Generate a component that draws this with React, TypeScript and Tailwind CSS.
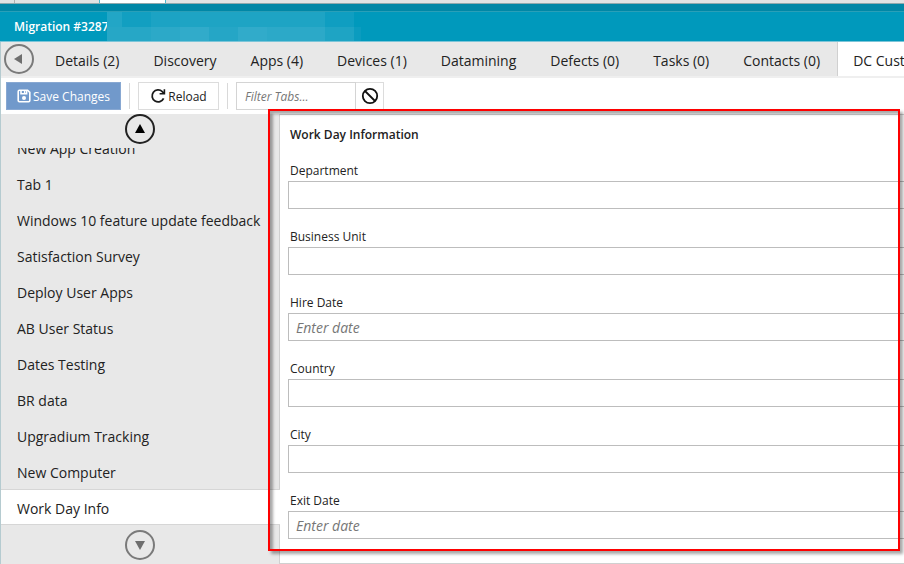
import React from 'react';

const tabs = [
  'Details (2)',
  'Discovery',
  'Apps (4)',
  'Devices (1)',
  'Datamining',
  'Defects (0)',
  'Tasks (0)',
  'Contacts (0)',
];

const sections = [
  'New App Creation',
  'Tab 1',
  'Windows 10 feature update feedback',
  'Satisfaction Survey',
  'Deploy User Apps',
  'AB User Status',
  'Dates Testing',
  'BR data',
  'Upgradium Tracking',
  'New Computer',
  'Work Day Info',
];

const fields = [
  { id: 'department', label: 'Department' },
  { id: 'business-unit', label: 'Business Unit' },
  { id: 'hire-date', label: 'Hire Date', placeholder: 'Enter date' },
  { id: 'country', label: 'Country' },
  { id: 'city', label: 'City' },
  { id: 'exit-date', label: 'Exit Date', placeholder: 'Enter date' },
];

const ArrowButton: React.FC<{ label: string; points: string; className: string }> = ({ label, points, className }) => (
  <button type="button" aria-label={label} className={`size-[30px] shrink-0 rounded-full border-2 ${className}`}>
    <svg viewBox="0 0 26 26" className="size-full" fill="currentColor">
      <polygon points={points} />
    </svg>
  </button>
);

// Pixelated block that hides the rest of the record name
const Mosaic: React.FC = () => (
  <svg viewBox="0 0 254 29" className="h-[29px] w-[254px] shrink-0" shapeRendering="crispEdges">
    <rect width="247" height="15" fill="#1ea4c4" />
    <rect width="15" height="15" fill="#22a6c6" />
    <rect x="15" width="29" height="15" fill="#129fc1" />
    <rect x="44" width="29" height="15" fill="#1ca3c4" />
    <rect x="218" width="29" height="15" fill="#0f9ec1" />
    <rect y="15" width="254" height="14" fill="#2ca9c8" />
    <rect y="15" width="44" height="14" fill="#26a7c6" />
    <rect x="73" y="15" width="29" height="14" fill="#31abca" />
    <rect x="102" y="15" width="29" height="14" fill="#25a6c6" />
    <rect x="131" y="15" width="29" height="14" fill="#31abca" />
    <rect x="218" y="15" width="29" height="14" fill="#1ea4c4" />
    <rect x="247" y="15" width="7" height="14" fill="#0b9cbf" />
  </svg>
);

const Header: React.FC = () => (
  <header className="shrink-0">
    <div className="flex h-1 border-b border-[#8fa9ad] bg-[#e0e3e3]">
      <div className="w-[15px] border-r border-[#b0b0b0]"></div>
      <div className="w-[85px] border-r border-[#4bb9cf]"></div>
      <div className="w-[66px] border-r border-[#4bb9cf] bg-white"></div>
    </div>
    <div className="h-2 border-b border-[#2a9fb8] bg-[#0087a6]"></div>
    <div className="flex h-[30px] items-end border-b border-[#7cc5d8] bg-[#0099bc]">
      <h1 className="w-[107px] overflow-hidden whitespace-nowrap pl-3.5 text-xs leading-7 font-semibold text-white">
        Migration #3287
      </h1>
      <Mosaic />
    </div>
  </header>
);

const TabBar: React.FC = () => (
  <nav className="flex h-9 shrink-0 items-center overflow-hidden border-b-2 border-[#efefef] bg-[#e8e8e8] pl-[3px]">
    <ArrowButton label="Scroll left" points="8,13 16,8 16,18" className="mr-1 border-[#7a7a7a] text-[#6e6e6e]" />
    {tabs.map((tab) => (
      <button key={tab} type="button" className="h-full shrink-0 px-[17px] pt-[3px] text-sm">
        {tab}
      </button>
    ))}
    <button type="button" className="h-full shrink-0 border-l border-[#d0d0d0] bg-white px-[15px] pt-[3px] text-sm">
      DC Custom
    </button>
  </nav>
);

const Toolbar: React.FC = () => (
  <div className="flex h-9 shrink-0 items-center bg-white pl-[5px] text-xs">
    <button
      type="button"
      className="flex h-7 w-[115px] items-center justify-center gap-0.5 border border-[#88a8d2] bg-[#7199cb] text-white"
    >
      <svg viewBox="0 0 14 14" className="size-3.5" fill="none" stroke="currentColor" strokeWidth="1.6">
        <path d="M1.2 2.4Q1.2 1.2 2.4 1.2H10.6L12.8 3.4V11.6Q12.8 12.8 11.6 12.8H2.4Q1.2 12.8 1.2 11.6Z" />
        <path d="M4 1.2V4.8H9.6V1.2" />
        <path d="M7.6 1.5V4" strokeWidth="1.4" />
        <circle cx="7" cy="8.9" r="2" fill="currentColor" stroke="none" />
      </svg>
      <span className="pt-0.5">Save Changes</span>
    </button>
    <div className="mx-2 h-[26px] w-px bg-[#d9d9d9]"></div>
    <button type="button" className="flex h-7 w-[81px] items-center justify-center gap-0.5 border border-[#dcdcdc]">
      <svg viewBox="0 0 16 16" className="size-4" fill="none" stroke="#1a1a1a" strokeWidth="1.8">
        <path d="M13.6 10.4A6 6 0 1 1 12.3 3.6L14 5.4" />
        <path d="M14.4 1.2V5.8H9.6" strokeWidth="1.6" />
      </svg>
      <span className="pt-0.5">Reload</span>
    </button>
    <div className="mx-2 h-[26px] w-px bg-[#d9d9d9]"></div>
    <input
      type="text"
      aria-label="Filter tabs"
      placeholder="Filter Tabs..."
      className="h-7 w-[120px] border border-[#d4d4d4] pl-2 italic placeholder:text-[#777]"
    />
    <button
      type="button"
      aria-label="Clear filter"
      className="flex h-7 w-7 items-center justify-center border border-l-0 border-[#dcdcdc]"
    >
      <svg viewBox="0 0 18 18" className="size-[18px]" fill="none" stroke="#111" strokeWidth="1.8">
        <circle cx="9" cy="9" r="7.2" />
        <path d="M4 4l10 10" />
      </svg>
    </button>
  </div>
);

const Sidebar: React.FC = () => (
  <aside className="flex w-[278px] shrink-0 flex-col bg-[#e8e8e8]">
    <div className="flex h-[34px] shrink-0 justify-center">
      <ArrowButton label="Scroll up" points="13,8 18,17 8,17" className="border-[#222] text-black" />
    </div>
    <div className="flex min-h-0 w-[279px] flex-1 flex-col justify-end overflow-hidden">
      {sections.map((name) => (
        <button
          key={name}
          type="button"
          className={`h-9 shrink-0 whitespace-nowrap pt-1 pl-4 text-left text-sm ${
            name === 'Work Day Info' ? 'relative z-10 border-y border-[#d6d6d6] bg-white' : ''
          }`}
        >
          {name}
        </button>
      ))}
    </div>
    <div className="flex h-[39px] shrink-0 items-center justify-center">
      <ArrowButton label="Scroll down" points="8,9 18,9 13,18" className="border-[#7a7a7a] text-[#6e6e6e]" />
    </div>
  </aside>
);

const WorkDayForm: React.FC = () => (
  <main className="min-w-0 flex-1 border-y border-l border-[#d0d0d0] bg-white pl-2">
    <h2 className="pt-2.5 pl-0.5 text-xs leading-5 font-semibold">Work Day Information</h2>
    <form className="flex flex-col gap-[18px] pt-4">
      {fields.map((field) => (
        <div key={field.id} className="flex flex-col">
          <label htmlFor={field.id} className="pl-0.5 text-xs leading-5">
            {field.label}
          </label>
          <input
            id={field.id}
            type="text"
            placeholder={field.placeholder}
            className="h-7 w-full border border-r-0 border-[#bdbdbd] pl-[7px] text-sm italic placeholder:text-[#777]"
          />
        </div>
      ))}
    </form>
  </main>
);

const App: React.FC = () => {
  return (
    <div className="flex h-screen flex-col overflow-hidden bg-white font-['Open_Sans',sans-serif] text-[#222]">
      <Header />
      <div className="flex min-h-0 flex-1 flex-col border-l border-[#b5cbd0]">
        <TabBar />
        <Toolbar />
        <div className="relative flex min-h-0 flex-1">
          <Sidebar />
          <WorkDayForm />
          <div className="pointer-events-none absolute -top-[5px] right-1 bottom-[13px] left-[267px] z-20 border-2 border-[#fe0000] shadow-[3px_3px_3px_rgba(0,0,0,0.35),inset_3px_3px_3px_rgba(0,0,0,0.35)]"></div>
        </div>
      </div>
    </div>
  );
};

export default App;
